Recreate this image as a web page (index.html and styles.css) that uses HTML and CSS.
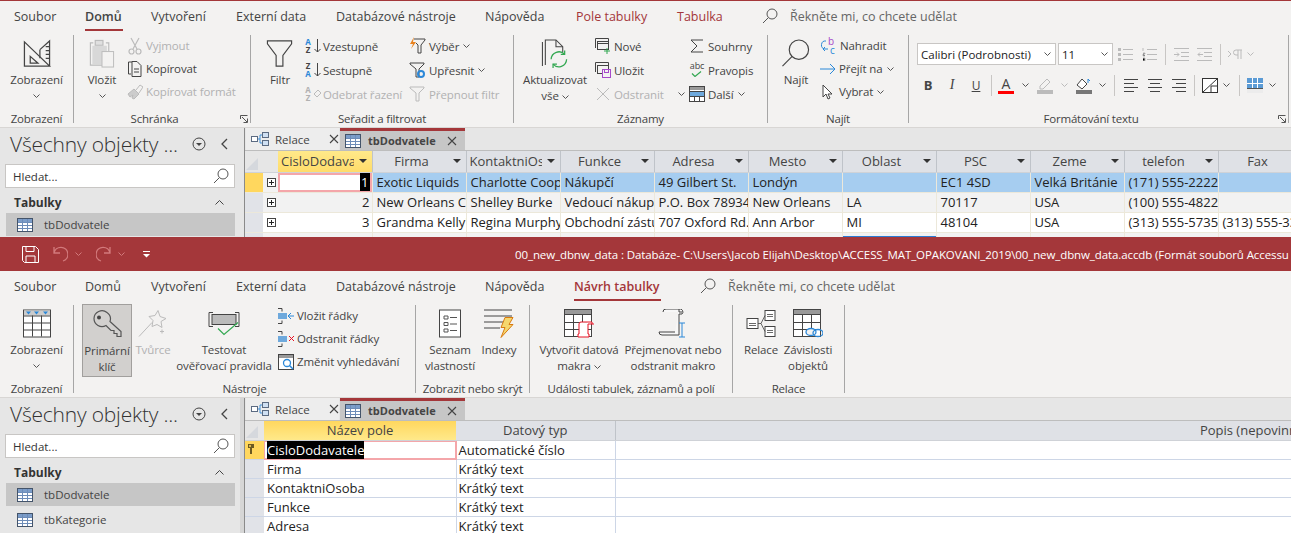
FILE: index.html
```html
<!DOCTYPE html>
<html lang="cs">
<head>
<meta charset="utf-8">
<title>Access</title>
<link rel="stylesheet" href="styles.css">
</head>
<body>
<svg class="defs" aria-hidden="true">
  <symbol id="tbl" viewBox="0 0 16 14"><rect x=".5" y=".5" width="15" height="13" fill="#fff" stroke="#44546a"/><rect x="1" y="1" width="14" height="3" fill="#7b9cc8"/><path d="M1 4.500h14M1 7.500h14M1 10.500h14M5.500 1v12M10.500 1v12" stroke="#6d8cb8" fill="none"/></symbol>
  <symbol id="rel" viewBox="0 0 18 14"><rect x=".5" y="4.500" width="6" height="5" fill="#fff" stroke="#5b6b82"/><rect x="11.500" y=".5" width="6" height="5" fill="#cfe0f3" stroke="#5b6b82"/><rect x="11.500" y="8.500" width="6" height="5" fill="#cfe0f3" stroke="#5b6b82"/><path d="M7 7h2M9 3v8M9 3h2M9 11h2" stroke="#3f8fd8" fill="none"/></symbol>
  <symbol id="x" viewBox="0 0 10 10"><path d="M1 1l8 8M9 1l-8 8" stroke="#444" fill="none" stroke-width="1.100"/></symbol>
  <symbol id="chev" viewBox="0 0 7 4"><path d="M.5.5l3 3 3-3" fill="none" stroke="#555"/></symbol>
  <symbol id="chevg" viewBox="0 0 7 4"><path d="M.5.5l3 3 3-3" fill="none" stroke="#bbb"/></symbol>
  <symbol id="chevt" viewBox="0 0 7 4"><path d="M.5.5l3 3 3-3" fill="none" stroke="#d27a7c"/></symbol>
  <symbol id="search" viewBox="0 0 16 16"><circle cx="10" cy="6" r="5" fill="none" stroke="#555"/><path d="M6.300 9.700L1 15" stroke="#555" fill="none"/></symbol>
  <symbol id="plus" viewBox="0 0 9 9"><rect x=".5" y=".5" width="8" height="8" fill="#fff" stroke="#444"/><path d="M2 4.500h5M4.500 2v5" stroke="#222"/></symbol>
</svg>

<section class="win win-a">
  <div class="redline"></div>
  <nav class="tabs">
    <span class="tab t1">Soubor</span>
    <span class="tab t2 active">Domů</span>
    <span class="tab t3">Vytvoření</span>
    <span class="tab t4">Externí data</span>
    <span class="tab t5">Databázové nástroje</span>
    <span class="tab t6">Nápověda</span>
    <span class="tab t7 ctx">Pole tabulky</span>
    <span class="tab t8 ctx">Tabulka</span>
    <span class="tell a"><svg width="16" height="16"><use href="#search"/></svg><span class="tell-t">Řekněte mi, co chcete udělat</span></span>
  </nav>
  <div class="ribbon">
    <div class="group g-view">
      <div class="body">
        <div class="big bw73">
          <svg class="bi" width="30" height="30" viewBox="0 0 30 30"><g fill="none" stroke="#444" stroke-width="1.300"><path d="M2 3L28 28H2Z"/><path d="M8 18l8 7H8Z"/><path d="M18 11L28 2V28"/><path d="M24 8h4M24 12h4M24 16h4M24 20h4"/><path d="M18 11v9"/></g></svg>
          <span>Zobrazení</span><svg class="ch" width="7" height="4"><use href="#chev"/></svg>
        </div>
      </div>
      <div class="glabel">Zobrazení</div>
    </div>
    <div class="group g-clip">
      <div class="body">
        <div class="big bw50 ml3">
          <svg class="bi" width="30" height="30" viewBox="0 0 30 30"><g fill="none" stroke="#bbb" stroke-width="1.200"><path d="M6 4H3v23h14"/><path d="M19 4h3v9"/><rect x="8" y="1.500" width="8" height="5" fill="#e0e0e0"/></g><rect x="5" y="7" width="15" height="19" fill="#d8d8d8"/><rect x="15" y="13" width="12" height="16" fill="#f3f2f1" stroke="#bbb"/></svg>
          <span>Vložit</span><svg class="ch" width="7" height="4"><use href="#chev"/></svg>
        </div>
        <div class="col tight">
          <div class="row off"><svg width="16" height="18" viewBox="0 0 16 18"><g fill="none" stroke="#bbb" stroke-width="1.200"><path d="M4 1l6 11M12 1L6 12"/><circle cx="4.500" cy="14.500" r="2.500"/><circle cx="11.500" cy="14.500" r="2.500"/></g></svg><span>Vyjmout</span></div>
          <div class="row"><svg width="16" height="18" viewBox="0 0 16 18"><g fill="none" stroke="#444"><path d="M5 2H1.500v12H4"/><path d="M5 1.500h5l4 4v11H5Z"/><path d="M7 9h5M7 12h5"/></g></svg><span>Kopírovat</span></div>
          <div class="row off"><svg width="16" height="18" viewBox="0 0 16 18"><path d="M1 11l6-5 5 5-5 5-2-1 1-3-3 2Z" fill="#ccc" stroke="#bbb"/><path d="M9 7l4-5 3 2-4 6" fill="none" stroke="#bbb"/></svg><span>Kopírovat formát</span></div>
        </div>
      </div>
      <div class="glabel has-launch">Schránka<svg class="launch" width="8" height="8" viewBox="0 0 8 8"><path d="M.5 4V.5H7.500M2 2l5 5M7.500 3.500v4H3.500" fill="none" stroke="#555"/></svg></div>
    </div>
    <div class="group g-sort">
      <div class="body">
        <div class="big bw48 ml5">
          <svg class="bi" width="30" height="30" viewBox="0 0 30 30"><path d="M2 2h25v3L18 17v11h-7V17L2 5Z" fill="none" stroke="#444" stroke-width="1.200"/></svg>
          <span>Filtr</span>
        </div>
        <div class="col w105">
          <div class="row"><span class="az"><b class="blue">A</b><b>Z</b></span><svg class="arrow" width="7" height="14" viewBox="0 0 7 14"><path d="M3.500 0v13M.5 10l3 3 3-3" fill="none" stroke="#444"/></svg><span>Vzestupně</span></div>
          <div class="row"><span class="az"><b>Z</b><b class="blue">A</b></span><svg class="arrow" width="7" height="14" viewBox="0 0 7 14"><path d="M3.500 0v13M.5 10l3 3 3-3" fill="none" stroke="#444"/></svg><span>Sestupně</span></div>
          <div class="row off"><span class="az"><b>A</b><b>Z</b></span><svg class="arrow" width="7" height="14" viewBox="0 0 7 14"><path d="M0 7l4-4 3 3-4 4Z" fill="none" stroke="#bbb"/></svg><span>Odebrat řazení</span></div>
        </div>
        <div class="col">
          <div class="row"><svg width="17" height="18" viewBox="0 0 17 18"><path d="M5 2h11v1l-4 5v8H9V8L7 6" fill="none" stroke="#444"/><path d="M5 0L1 7h3L2 12l5-7H4Z" fill="#e8821e"/></svg><span>Výběr</span><svg class="ci" width="7" height="4"><use href="#chev"/></svg></div>
          <div class="row"><svg width="17" height="18" viewBox="0 0 17 18"><path d="M1 2h14v1l-5 5v8H7V8L1 3Z" fill="none" stroke="#444"/><circle cx="12" cy="13" r="3" fill="none" stroke="#2b88d8" stroke-width="2"/></svg><span>Upřesnit</span><svg class="ci" width="7" height="4"><use href="#chev"/></svg></div>
          <div class="row off"><svg width="17" height="18" viewBox="0 0 17 18"><path d="M1 2h14v1l-5 5v8H7V8L1 3Z" fill="none" stroke="#bbb"/></svg><span>Přepnout filtr</span></div>
        </div>
      </div>
      <div class="glabel">Seřadit a filtrovat</div>
    </div>
    <div class="group g-rec">
      <div class="body">
        <div class="big bw80 ml1">
          <svg class="bi" width="30" height="30" viewBox="0 0 30 30"><g fill="none" stroke="#444" stroke-width="1.100"><path d="M2 3v25"/><path d="M5 27V1h11l7 7v6"/><path d="M16 1v7h7"/></g><g fill="none" stroke="#33a852" stroke-width="1.300"><path d="M11 21a8 8 0 0 1 14-5"/><path d="M27 21a8 8 0 0 1-14 5"/><path d="M25 12v4h-4M13 30v-4h4"/></g></svg>
          <span>Aktualizovat</span><span>vše <svg class="cin" width="7" height="4"><use href="#chev"/></svg></span>
        </div>
        <div class="col w94">
          <div class="row"><svg width="16" height="16" viewBox="0 0 16 16"><g fill="none" stroke="#444"><path d="M.5 10V.5h13V3"/><rect x="2.500" y="3.500" width="11" height="8"/><path d="M2.500 5.500h11"/></g><path d="M9 13h6M12 10v6" stroke="#33a852"/></svg><span>Nové</span></div>
          <div class="row"><svg width="16" height="16" viewBox="0 0 16 16"><g fill="none" stroke="#444"><path d="M.5 10V.5h13V3"/><rect x="2.500" y="3.500" width="11" height="8"/></g><rect x="7.500" y="7.500" width="8" height="8" fill="#f3f2f1" stroke="#a64ac9"/><rect x="9.500" y="7.500" width="4" height="3" fill="none" stroke="#a64ac9"/></svg><span>Uložit</span></div>
          <div class="row off"><svg width="16" height="16" viewBox="0 0 16 16"><path d="M2 2l12 12M14 2L2 14" stroke="#bbb" fill="none"/></svg><span>Odstranit</span><svg class="cia" width="7" height="4"><use href="#chev"/></svg></div>
        </div>
        <div class="col">
          <div class="row"><svg width="16" height="16" viewBox="0 0 16 16"><path d="M14 2H2l6 6-6 6h12" fill="none" stroke="#444"/></svg><span>Souhrny</span></div>
          <div class="row"><span class="abc">abc<svg width="12" height="6" viewBox="0 0 12 6"><path d="M1 2.500l3 3 6-5" fill="none" stroke="#33a852" stroke-width="1.200"/></svg></span><span>Pravopis</span></div>
          <div class="row"><svg width="16" height="16" viewBox="0 0 16 16"><rect x=".5" y=".5" width="15" height="15" fill="#fff" stroke="#444"/><rect x="1" y="1" width="14" height="3" fill="#999"/><rect x="1" y="6" width="14" height="4" fill="#6ea9dc"/><path d="M1 5.500h14M1 10.500h14M5.500 11v4M10.500 11v4" stroke="#444" fill="none"/></svg><span>Další</span><svg class="ci" width="7" height="4"><use href="#chev"/></svg></div>
        </div>
      </div>
      <div class="glabel">Záznamy</div>
    </div>
    <div class="group g-find">
      <div class="body">
        <div class="big bw48 ml4">
          <svg class="bi" width="30" height="30" viewBox="0 0 30 30"><circle cx="18" cy="11" r="10" fill="none" stroke="#444" stroke-width="1.200"/><path d="M11 18L1 28" fill="none" stroke="#444" stroke-width="1.200"/></svg>
          <span>Najít</span>
        </div>
        <div class="col tight">
          <div class="row"><span class="rep"><i class="pur">b</i><i class="cy">c</i><svg width="8" height="13" viewBox="0 0 8 13"><path d="M6 1a4 4 0 0 0-1 8h3M5 7l-2 2 2 2" fill="none" stroke="#2b88d8"/></svg></span><span>Nahradit</span></div>
          <div class="row"><svg width="16" height="14" viewBox="0 0 16 14"><path d="M0 7h15M10 2l5 5-5 5" fill="none" stroke="#2b88d8"/></svg><span>Přejít na</span><svg class="ci" width="7" height="4"><use href="#chev"/></svg></div>
          <div class="row"><svg width="16" height="16" viewBox="0 0 16 16"><path d="M3 1v12l3-3 2 5 2-1-2-4h4Z" fill="#fff" stroke="#444"/></svg><span>Vybrat</span><svg class="ci" width="7" height="4"><use href="#chev"/></svg></div>
        </div>
      </div>
      <div class="glabel">Najít</div>
    </div>
    <div class="group g-fmt">
      <div class="fmt">
        <div class="fr1">
          <div class="combo"><span>Calibri (Podrobnosti)</span><svg width="7" height="4"><use href="#chev"/></svg></div>
          <div class="combo size"><span>11</span><svg width="7" height="4"><use href="#chev"/></svg></div>
          <svg width="15" height="14" viewBox="0 0 15 14"><g stroke="#bbb"><path d="M5 2.500h10M5 7.500h10M5 12.500h10"/></g><g fill="#bbb"><rect y="1" width="3" height="3"/><rect y="6" width="3" height="3"/><rect y="11" width="3" height="3"/></g></svg>
          <svg width="15" height="14" viewBox="0 0 15 14"><g stroke="#bbb"><path d="M5 2.500h10M5 7.500h10M5 12.500h10M1 1v3M1 6h2v1H1v2h2M1 11h2v3H1"/></g></svg>
          <i class="vs"></i>
          <svg width="15" height="13" viewBox="0 0 15 13"><path d="M0 .5h15M7 4.500h8M7 8.500h8M0 12.500h15M0 6.500h5M3 4.500l2 2-2 2" fill="none" stroke="#bbb"/></svg>
          <svg width="15" height="13" viewBox="0 0 15 13"><path d="M0 .5h15M7 4.500h8M7 8.500h8M0 12.500h15M1 6.500h5M3 4.500l-2 2 2 2" fill="none" stroke="#bbb"/></svg>
          <i class="vs"></i>
          <svg width="15" height="10" viewBox="0 0 15 10"><path d="M0 2l3 3-3 3M8 1h6M8 1a2.500 2.500 0 0 0 0 5h2M10 1v9M13 1v9" fill="none" stroke="#bbb"/></svg>
          <svg width="7" height="4"><use href="#chevg"/></svg>
        </div>
        <div class="fr2">
          <b class="fb">B</b><i class="fi">I</i><u class="fu">U</u>
          <i class="vs"></i>
          <span class="fc"><span class="fa">A</span></span><svg width="7" height="4"><use href="#chev"/></svg>
          <svg width="16" height="17" viewBox="0 0 16 17"><path d="M3 9l7-7 3 3-7 7H3Z" fill="none" stroke="#bbb"/><rect y="13" width="16" height="4" fill="#bbb"/></svg><svg width="7" height="4"><use href="#chevg"/></svg>
          <svg width="16" height="17" viewBox="0 0 16 17"><path d="M1 8l5-6 5 5-5 5Z" fill="#fff" stroke="#444"/><path d="M12 6V2l2 2" fill="none" stroke="#2b88d8"/><rect y="13" width="16" height="4" fill="#777"/></svg><svg width="7" height="4"><use href="#chev"/></svg>
          <i class="vs"></i>
          <svg width="14" height="14" viewBox="0 0 14 14"><path d="M0 1.500h14M0 5.500h10M0 9.500h14M0 13.500h10" stroke="#444"/></svg>
          <svg width="14" height="14" viewBox="0 0 14 14"><path d="M0 1.500h14M2 5.500h10M0 9.500h14M2 13.500h10" stroke="#444"/></svg>
          <svg width="14" height="14" viewBox="0 0 14 14"><path d="M0 1.500h14M4 5.500h10M0 9.500h14M4 13.500h10" stroke="#444"/></svg>
          <i class="vs"></i>
          <svg width="16" height="15" viewBox="0 0 16 15"><rect x=".5" y=".5" width="15" height="14" fill="#fff" stroke="#333"/><path d="M1 14L15 1M9 8h6M9 8v6" stroke="#333" fill="none"/></svg><svg width="7" height="4"><use href="#chev"/></svg>
          <i class="vs"></i>
          <svg width="16" height="15" viewBox="0 0 16 15"><rect x="0" y="0" width="16" height="10" fill="#5b9bd5"/><path d="M0 5.500h16M5.500 0v10M10.500 0v10" stroke="#fff"/><path d="M0 10.500h16" stroke="#555"/><rect y="11" width="16" height="4" fill="#ececec"/></svg><svg width="7" height="4"><use href="#chev"/></svg>
        </div>
      </div>
      <div class="glabel has-launch">Formátování textu<svg class="launch" width="8" height="8" viewBox="0 0 8 8"><path d="M.5 4V.5H7.500M2 2l5 5M7.500 3.500v4H3.500" fill="none" stroke="#555"/></svg></div>
    </div>
  </div>
  <div class="shadow"></div>
  <div class="work h-a">
    <aside class="navp">
      <div class="navhead"><span class="navtitle">Všechny objekty ...</span><svg width="16" height="16" viewBox="0 0 16 16"><circle cx="8" cy="8" r="6" fill="none" stroke="#444"/><path d="M5 7h6l-3 3Z" fill="#444"/></svg><svg class="back" width="7" height="12" viewBox="0 0 7 12"><path d="M6 1L1 6l5 5" fill="none" stroke="#444" stroke-width="1.300"/></svg></div>
      <div class="navsearch"><span>Hledat...</span><svg width="16" height="16"><use href="#search"/></svg></div>
      <div class="navsec"><b>Tabulky</b><svg width="9" height="5" viewBox="0 0 9 5"><path d="M.5 4.500l4-4 4 4" fill="none" stroke="#444"/></svg></div>
      <div class="navitem sel"><svg width="16" height="14"><use href="#tbl"/></svg><span>tbDodvatele</span></div>
    </aside>
    <div class="split"></div>
    <div class="main">
      <div class="doctabs">
        <div class="dt rel"><svg width="18" height="14"><use href="#rel"/></svg><span>Relace</span><svg class="dx" width="10" height="10"><use href="#x"/></svg></div>
        <div class="dt on"><svg width="16" height="14"><use href="#tbl"/></svg><b>tbDodvatele</b><svg class="dx" width="10" height="10"><use href="#x"/></svg></div>
      </div>
      <table class="sheet">
        <colgroup><col class="c-sel"><col class="c-exp"><col class="c-d"><col class="c-d"><col class="c-d"><col class="c-d"><col class="c-d"><col class="c-d"><col class="c-d"><col class="c-d"><col class="c-d"><col class="c-d"><col class="c-d"></colgroup>
        <thead><tr>
          <th colspan="2" class="corner"><span class="tri"></span></th>
          <th class="hy"><div class="hd"><span>CisloDodavatele</span><i class="arr"></i></div></th>
          <th><div class="hd"><span>Firma</span><i class="arr"></i></div></th>
          <th><div class="hd"><span>KontaktniOsoba</span><i class="arr"></i></div></th>
          <th><div class="hd"><span>Funkce</span><i class="arr"></i></div></th>
          <th><div class="hd"><span>Adresa</span><i class="arr"></i></div></th>
          <th><div class="hd"><span>Mesto</span><i class="arr"></i></div></th>
          <th><div class="hd"><span>Oblast</span><i class="arr"></i></div></th>
          <th><div class="hd"><span>PSC</span><i class="arr"></i></div></th>
          <th><div class="hd"><span>Zeme</span><i class="arr"></i></div></th>
          <th><div class="hd"><span>telefon</span><i class="arr"></i></div></th>
          <th><div class="hd"><span>Fax</span><i class="arr"></i></div></th>
        </tr></thead>
        <tbody>
          <tr class="r-sel"><td class="rs act"></td><td class="ex"><svg width="9" height="9"><use href="#plus"/></svg></td><td class="num cur"><span class="hl">1</span></td><td>Exotic Liquids</td><td>Charlotte Cooper</td><td>Nákupčí</td><td>49 Gilbert St.</td><td>Londýn</td><td></td><td>EC1 4SD</td><td>Velká Británie</td><td>(171) 555-2222</td><td></td></tr>
          <tr class="r-alt"><td class="rs"></td><td class="ex"><svg width="9" height="9"><use href="#plus"/></svg></td><td class="num">2</td><td>New Orleans Cajun</td><td>Shelley Burke</td><td>Vedoucí nákupu</td><td>P.O. Box 78934</td><td>New Orleans</td><td>LA</td><td>70117</td><td>USA</td><td>(100) 555-4822</td><td></td></tr>
          <tr><td class="rs"></td><td class="ex"><svg width="9" height="9"><use href="#plus"/></svg></td><td class="num">3</td><td>Grandma Kelly's</td><td>Regina Murphy</td><td>Obchodní zástupce</td><td>707 Oxford Rd.</td><td>Ann Arbor</td><td>MI</td><td>48104</td><td>USA</td><td>(313) 555-5735</td><td>(313) 555-3349</td></tr>
          <tr class="r-alt r-last"><td class="rs"></td><td class="ex"></td><td></td><td></td><td></td><td></td><td></td><td></td><td class="bl"></td><td></td><td></td><td></td><td></td></tr>
        </tbody>
      </table>
    </div>
  </div>
</section>

<header class="titlebar">
  <svg class="q-save" width="17" height="17" viewBox="0 0 17 17"><path d="M.5.5h13l3 3v13H2.500l-2-2Z M4 16.500V10h9v6.500M4 .5v5h8v-5" fill="none" stroke="#fff"/></svg>
  <svg class="q-undo" width="15" height="16" viewBox="0 0 15 16"><path d="M1 1v6h6M1 7a7 7 0 1 1 9 8" fill="none" stroke="#d27a7c" stroke-width="1.300"/></svg>
  <svg class="q-c" width="7" height="4"><use href="#chevt"/></svg>
  <svg class="q-redo" width="15" height="16" viewBox="0 0 15 16"><path d="M14 1v6H8M14 7a7 7 0 1 0-9 8" fill="none" stroke="#d27a7c" stroke-width="1.300"/></svg>
  <svg class="q-c" width="7" height="4"><use href="#chevt"/></svg>
  <svg class="q-cust" width="7" height="7" viewBox="0 0 7 7"><path d="M0 .5h7" stroke="#fff"/><path d="M0 3h7L3.500 6.500Z" fill="#fff"/></svg>
  <span class="wtitle">00_new_dbnw_data : Databáze- C:\Users\Jacob Elijah\Desktop\ACCESS_MAT_OPAKOVANI_2019\00_new_dbnw_data.accdb (Formát souborů Accessu 2007 - 2016)</span>
</header>

<section class="win win-b">
  <nav class="tabs">
    <span class="tab t1">Soubor</span>
    <span class="tab t2">Domů</span>
    <span class="tab t3">Vytvoření</span>
    <span class="tab t4">Externí data</span>
    <span class="tab t5">Databázové nástroje</span>
    <span class="tab t6">Nápověda</span>
    <span class="tab t9 ctx active">Návrh tabulky</span>
    <span class="tell b"><svg width="16" height="16"><use href="#search"/></svg><span class="tell-t">Řekněte mi, co chcete udělat</span></span>
  </nav>
  <div class="ribbon">
    <div class="group g-view">
      <div class="body">
        <div class="big bw73">
          <svg class="bi" width="28" height="28" viewBox="0 0 28 28"><rect x=".5" y=".5" width="27" height="27" fill="#fff" stroke="#444"/><rect x="1" y="1" width="26" height="5" fill="#ccc"/><path d="M3 2h5l-2.500 3ZM11 2h5l-2.500 3ZM20 2h5l-2.500 3Z" fill="#2b88d8"/><path d="M1 6.500h26M1 13.500h26M1 20.500h26M9.500 6v21M18.500 6v21" stroke="#444" fill="none"/></svg>
          <span>Zobrazení</span><svg class="ch" width="7" height="4"><use href="#chev"/></svg>
        </div>
      </div>
      <div class="glabel">Zobrazení</div>
    </div>
    <div class="group g-tools">
      <div class="body">
        <div class="big bw50 ml8 pressed">
          <svg class="bi" width="30" height="28" viewBox="0 0 30 28"><path d="M2 8a8 8 0 0 1 13-6 8 8 0 0 1 3 9l11 10v5h-4v-3h-3v-3h-3l-5-5a8 8 0 0 1-12-7Z" fill="none" stroke="#555" stroke-width="1.200"/><circle cx="7" cy="7" r="2" fill="#444"/></svg>
          <span>Primární</span><span>klíč</span>
        </div>
        <div class="big bw42 off">
          <svg class="bi" width="30" height="28" viewBox="0 0 30 28"><path d="M1 27L14 13" stroke="#bbb" fill="none"/><path d="M20 1l2 6 6 2-5 3 1 6-5-3-5 2 1-6-4-4 6-1Z" fill="none" stroke="#bbb"/><path d="M24 20v4M22 22h4" stroke="#bbb"/></svg>
          <span>Tvůrce</span>
        </div>
        <div class="big bw100">
          <svg class="bi" width="32" height="28" viewBox="0 0 32 28"><path d="M5 3H1v14h4M27 3h4v14h-4" fill="none" stroke="#444"/><rect x="4" y="5" width="24" height="10" fill="#bbb" stroke="#444"/><path d="M10 19l6 6 14-12" fill="none" stroke="#33a852" stroke-width="1.200"/></svg>
          <span>Testovat</span><span class="nw">ověřovací pravidla</span>
        </div>
        <div class="col tight ml4">
          <div class="row"><svg width="16" height="16" viewBox="0 0 16 16"><path d="M0 .5h4v3M0 15.500h4v-3" fill="none" stroke="#444"/><rect y="5" width="9" height="6" fill="#6ea9dc"/><path d="M16 8H10M13 5l-3 3 3 3" fill="none" stroke="#2b88d8"/></svg><span>Vložit řádky</span></div>
          <div class="row"><svg width="16" height="16" viewBox="0 0 16 16"><path d="M0 .5h4v3M0 15.500h4v-3" fill="none" stroke="#444"/><rect y="5" width="9" height="6" fill="#6ea9dc"/><path d="M11 5l5 5M16 5l-5 5" fill="none" stroke="#e81123"/></svg><span>Odstranit řádky</span></div>
          <div class="row"><svg width="16" height="16" viewBox="0 0 16 16"><rect x=".5" y=".5" width="15" height="15" fill="#fff" stroke="#444"/><rect x="1" y="1" width="14" height="3" fill="#999"/><circle cx="9" cy="9" r="3.500" fill="none" stroke="#2b88d8" stroke-width="1.300"/><path d="M11.500 11.500L15 15" stroke="#2b88d8" stroke-width="1.500"/></svg><span>Změnit vyhledávání</span></div>
        </div>
      </div>
      <div class="glabel">Nástroje</div>
    </div>
    <div class="group g-show">
      <div class="body">
        <div class="big bw68">
          <svg class="bi" width="22" height="28" viewBox="0 0 22 28"><rect x=".5" y=".5" width="21" height="27" fill="#fff" stroke="#444"/><path d="M5 6.500h4v3H5ZM5 13h4v3H5ZM5 19.500h4v3H5ZM11 8h7M11 14.500h7M11 21h7" fill="none" stroke="#555"/></svg>
          <span>Seznam</span><span>vlastností</span>
        </div>
        <div class="big bw30">
          <svg class="bi" width="30" height="28" viewBox="0 0 30 28"><path d="M0 .5h28M0 6.500h28M0 12.500h20M0 18.500h16" stroke="#444" fill="none"/><path d="M21 8h8l-4 7h4L17 28l4-10h-4Z" fill="#f5d76e" stroke="#d87a10"/></svg>
          <span>Indexy</span>
        </div>
      </div>
      <div class="glabel">Zobrazit nebo skrýt</div>
    </div>
    <div class="group g-evt">
      <div class="body">
        <div class="big bw92 ml3">
          <svg class="bi" width="30" height="29" viewBox="0 0 30 29"><rect x=".5" y=".5" width="27" height="27" fill="#fff" stroke="#444"/><rect x="1" y="1" width="26" height="4" fill="#999"/><path d="M1 5.500h26M1 13.500h26M1 20.500h26M9.500 5v23M18.500 5v23" stroke="#444" fill="none"/><path d="M17 13h11v2h2M17 13a2 2 0 0 0-2 2v10h-1v3h11v-3h-1V15h4" fill="#fff" stroke="#e81123"/></svg>
          <span>Vytvořit datová</span><span>makra <svg class="cin" width="7" height="4"><use href="#chev"/></svg></span>
        </div>
        <div class="big bw96">
          <svg class="bi" width="30" height="29" viewBox="0 0 30 29"><path d="M5 3a3 3 0 0 1 3-3h13v3h3M21 0a3 3 0 0 1 3 5h-3v21H4a3 3 0 0 1-3-3h16" fill="#f7f7f7" stroke="#444"/><path d="M24 14v14M21 14h6M21 28h6" fill="none" stroke="#2b88d8"/></svg>
          <span class="nw">Přejmenovat nebo</span><span class="nw">odstranit makro</span>
        </div>
      </div>
      <div class="glabel">Události tabulek, záznamů a polí</div>
    </div>
    <div class="group g-rels">
      <div class="body">
        <div class="big bw36 ml10">
          <svg class="bi" width="30" height="28" viewBox="0 0 30 28"><rect x="1" y="9" width="11" height="10" fill="#fff" stroke="#444"/><rect x="19" y="1" width="10" height="10" fill="#fff" stroke="#444"/><rect x="19" y="17" width="10" height="10" fill="#fff" stroke="#444"/><path d="M3 14h7M3 16h7M21 5h6M21 7h6M21 21h6M21 23h6M12 14h3l4-8M15 14l4 8" fill="none" stroke="#444" stroke-width=".8"/></svg>
          <span>Relace</span>
        </div>
        <div class="big bw58">
          <svg class="bi" width="30" height="29" viewBox="0 0 30 29"><rect x=".5" y=".5" width="27" height="27" fill="#fff" stroke="#444"/><rect x="1" y="1" width="26" height="4" fill="#999"/><path d="M1 5.500h26M1 13.500h26M1 20.500h26M9.500 5v23M18.500 5v23" stroke="#444" fill="none"/><ellipse cx="18" cy="23" rx="5" ry="3.500" fill="#f3f2f1" stroke="#2b88d8" stroke-width="1.300"/><ellipse cx="25" cy="24" rx="5" ry="3.500" fill="none" stroke="#2b88d8" stroke-width="1.300"/></svg>
          <span>Závislosti</span><span>objektů</span>
        </div>
      </div>
      <div class="glabel">Relace</div>
    </div>
  </div>
  <div class="shadow"></div>
  <div class="work h-b">
    <aside class="navp">
      <div class="navhead"><span class="navtitle">Všechny objekty ...</span><svg width="16" height="16" viewBox="0 0 16 16"><circle cx="8" cy="8" r="6" fill="none" stroke="#444"/><path d="M5 7h6l-3 3Z" fill="#444"/></svg><svg class="back" width="7" height="12" viewBox="0 0 7 12"><path d="M6 1L1 6l5 5" fill="none" stroke="#444" stroke-width="1.300"/></svg></div>
      <div class="navsearch"><span>Hledat...</span><svg width="16" height="16"><use href="#search"/></svg></div>
      <div class="navsec"><b>Tabulky</b><svg width="9" height="5" viewBox="0 0 9 5"><path d="M.5 4.500l4-4 4 4" fill="none" stroke="#444"/></svg></div>
      <div class="navitem sel"><svg width="16" height="14"><use href="#tbl"/></svg><span>tbDodvatele</span></div>
      <div class="navitem"><svg width="16" height="14"><use href="#tbl"/></svg><span>tbKategorie</span></div>
    </aside>
    <div class="split light"></div>
    <div class="main">
      <div class="doctabs">
        <div class="dt rel"><svg width="18" height="14"><use href="#rel"/></svg><span>Relace</span><svg class="dx" width="10" height="10"><use href="#x"/></svg></div>
        <div class="dt on"><svg width="16" height="14"><use href="#tbl"/></svg><b>tbDodvatele</b><svg class="dx" width="10" height="10"><use href="#x"/></svg></div>
      </div>
      <table class="design">
        <colgroup><col class="d-sel"><col class="d-name"><col class="d-type"><col class="d-desc"></colgroup>
        <thead><tr><th class="corner"><span class="tri"></span></th><th class="hy2">Název pole</th><th>Datový typ</th><th>Popis (nepovinné)</th></tr></thead>
        <tbody>
          <tr><td class="rs act"><svg class="key" width="6" height="11" viewBox="0 0 6 11"><path d="M0 0h6v4H4v6H2V4H0Z" fill="#6b5a22"/><circle cx="2" cy="2" r="1" fill="#ffd75e"/></svg></td><td class="cur2"><span class="hl">CisloDodavatele</span></td><td>Automatické číslo</td><td></td></tr>
          <tr><td class="rs"></td><td>Firma</td><td>Krátký text</td><td></td></tr>
          <tr><td class="rs"></td><td>KontaktniOsoba</td><td>Krátký text</td><td></td></tr>
          <tr><td class="rs"></td><td>Funkce</td><td>Krátký text</td><td></td></tr>
          <tr><td class="rs"></td><td>Adresa</td><td>Krátký text</td><td></td></tr>
        </tbody>
      </table>
    </div>
  </div>
</section>
</body>
</html>
```

FILE: styles.css
```css
* { box-sizing: border-box; }
html, body { margin: 0; padding: 0; }
body {
  width: 1291px;
  height: 533px;
  overflow: hidden;
  background: #e6e6e6;
  font-family: "Open Sans", "Noto Sans", "Liberation Sans", sans-serif;
  font-size: 12px;
  color: #444;
}
.defs { display: none; }
svg { flex: none; display: block; }

.win { background: #f3f2f1; overflow: hidden; }
.win-a { height: 237px; }
.win-b { height: 262px; }
.redline { height: 1px; background: #a4373a; }

/* Tabs */
.tabs { display: flex; height: 30px; align-items: center; background: #f3f2f1; font-size: 12.500px; }
.tab { position: relative; white-space: nowrap; flex: none; }
.t1 { margin-left: 14px; width: 71px; }
.t2 { width: 66px; }
.t3 { width: 85px; }
.t4 { width: 100px; }
.t5 { width: 149px; }
.t6 { width: 91px; }
.t7 { width: 101px; }
.t8 { width: 85px; }
.t9 { margin-left: -2px; width: 127px; }
.ctx { color: #a4373a; }
.tab.active { font-weight: 600; }
.tab.active::after {
  content: "";
  position: absolute;
  left: 0;
  bottom: -6px;
  height: 2px;
  width: 38px;
  background: #a4373a;
}
.t9.active::after { width: 87px; }
.tell { display: flex; align-items: center; color: #666; }
.tell-t { margin-left: 12px; white-space: nowrap; }
.tell.b { margin-left: -1px; }

/* Ribbon */
.ribbon { display: flex; height: 96px; padding-top: 4px; background: #f3f2f1; }
.group { flex: none; height: 88px; border-right: 1px solid #a6a6a6; display: flex; flex-direction: column; }
.g-view { width: 74px; }
.g-clip { width: 177px; }
.g-sort { width: 263px; }
.g-rec { width: 254px; }
.g-find { width: 141px; }
.g-fmt { width: 380px; }
.g-tools { width: 342px; }
.g-show { width: 114px; }
.g-evt { width: 203px; }
.g-rels { width: 112px; }
.body { flex: 1; display: flex; min-height: 0; }
.glabel {
  position: relative;
  flex: none;
  height: 16px;
  margin-bottom: -4px;
  line-height: 16px;
  text-align: center;
  font-size: 11.500px;
  letter-spacing: -.2px;
  white-space: nowrap;
}
.has-launch { padding-right: 15px; }
.launch { position: absolute; right: 2px; top: 4px; }

.big {
  flex: none;
  display: flex;
  flex-direction: column;
  align-items: center;
  padding-top: 4px;
  line-height: 16px;
  white-space: nowrap;
  font-size: 11.500px;
  letter-spacing: -.1px;
}
.big .bi { height: 29px; margin-bottom: 4px; }
.big .ch { margin-top: 6px; }
.cin { display: inline-block; vertical-align: middle; }
.bw30 { width: 30px; }
.bw36 { width: 36px; }
.bw42 { width: 42px; }
.bw48 { width: 48px; }
.bw50 { width: 50px; }
.bw58 { width: 58px; }
.bw68 { width: 68px; }
.bw73 { width: 73px; }
.bw80 { width: 80px; }
.bw92 { width: 92px; }
.bw96 { width: 96px; }
.bw100 { width: 100px; }
.ml1 { margin-left: 1px; }
.ml3 { margin-left: 3px; }
.ml4 { margin-left: 4px; }
.ml5 { margin-left: 5px; }
.ml8 { margin-left: 8px; }
.ml10 { margin-left: 10px; }
.off, .off span { color: #b1b1b1; }
.pressed {
  height: 73px;
  margin-top: -1px;
  padding-top: 5px;
  background: #d2d0ce;
  border: 1px solid #a19f9d;
}
.nw { white-space: nowrap; }

.col { flex: none; display: flex; flex-direction: column; margin-top: -1px; }
.col.tight .row { height: 23px; }
.w105 { width: 105px; }
.w94 { width: 94px; }
.row { display: flex; align-items: center; flex: none; height: 24px; gap: 3px; white-space: nowrap; font-size: 11.500px; letter-spacing: -.1px; }
.ci { margin-left: 1px; }
.cia { margin-left: 11px; }
.az { display: flex; flex-direction: column; width: 8px; margin-right: -1px; font-size: 8px; line-height: 8px; align-items: center; }
.az b { font-weight: 700; }
.az .blue { color: #2b88d8; }
.arrow { margin-right: -1px; }
.abc { display: flex; flex-direction: column; align-items: center; width: 16px; font-size: 9px; line-height: 10px; margin-top: -2px; }
.rep { position: relative; width: 17px; height: 18px; display: block; }
.rep svg { position: absolute; left: 0; top: 3px; }
.rep i { position: absolute; font-style: normal; font-size: 10px; line-height: 10px; }
.rep .pur { left: 8px; top: -1px; color: #a64ac9; }
.rep .cy { left: 10px; top: 8px; color: #2b88d8; }

/* Format group */
.fmt { flex: 1; padding: 8px 0 0 8px; }
.fr1 {
  display: grid;
  grid-template-columns: 139px 57px 25px 23px 8px 24px 23px 8px 22px 8px;
  justify-items: center;
  align-items: center;
  height: 22px;
}
.fr2 {
  display: grid;
  grid-template-columns: 24px 24px 24px 6px 24px 14px 26px 12px 28px 8px 16px 18px 30px 18px 12px 20px 12px 14px 18px 16px;
  justify-items: center;
  align-items: center;
  height: 22px;
  margin: 9px 0 0 -1px;
}
.combo {
  display: flex;
  align-items: center;
  justify-content: space-between;
  width: 139px;
  height: 22px;
  padding: 0 4px 0 3px;
  background: #fff;
  border: 1px solid #c8c6c4;
  color: #222;
  font-size: 11.500px;
  white-space: nowrap;
}
.combo.size { width: 55px; margin-left: 2px; justify-self: start; }
.vs { display: block; width: 1px; height: 21px; background: #c8c6c4; }
.fb { font-size: 13px; }
.fi { font-family: "Liberation Serif", serif; font-size: 14px; }
.fu { font-size: 12px; }
.fa { display: block; width: 16px; text-align: center; font-size: 14px; line-height: 14px; border-bottom: 3px solid #f00; }

.shadow { height: 1px; background: #d8d6d4; }

/* Workspace */
.work { display: flex; background: #e6e6e6; }
.h-a { height: 109px; overflow: hidden; }
.h-b { height: 135px; overflow: hidden; }
.navp { flex: none; width: 240px; }
.navhead { display: flex; align-items: center; height: 32px; padding-left: 10px; }
.navtitle { width: 181px; font-size: 21px; letter-spacing: -.2px; font-weight: 300; white-space: nowrap; color: #333; }
.navhead .back { margin-left: 14px; }
.navsearch {
  display: flex;
  align-items: center;
  justify-content: space-between;
  height: 24px;
  margin: 4px 5px 0;
  padding: 0 5px 0 7px;
  background: #fff;
  border: 1px solid #c8c6c4;
  color: #333;
  font-size: 11.500px;
}
.navsec { display: flex; align-items: center; justify-content: space-between; height: 25px; padding: 3px 16px 0 14px; font-size: 12px; color: #333; }
.navitem { display: flex; align-items: center; height: 23px; margin: 0 5px 2px 6px; padding-left: 11px; gap: 11px; font-size: 11.500px; }
.navitem.sel { background: #c6c6c6; }
.split { flex: none; width: 5px; background: #e6e6e6; border-right: 1px solid #8a8a8a; }
.split.light { background: #d6d6d6; }
.main { flex: 1; min-width: 0; overflow: hidden; }
.doctabs { display: flex; height: 23px; padding-left: 1px; border-bottom: 1px solid #bdbdbd; }
.dt { display: flex; align-items: center; height: 22px; flex: none; font-size: 11.500px; }
.dt.rel { width: 93px; padding-left: 5px; gap: 6px; background: #ededed; }
.dt.rel .dx { margin-left: 13px; }
.dt.on { width: 125px; margin-left: 1px; padding-left: 5px; gap: 7px; background: #c6c6c6; border-top: 3px solid #a4373a; }
.dt.on b { width: 72px; white-space: nowrap; font-weight: 700; font-size: 11px; }

/* Datasheet */
table { border-collapse: collapse; table-layout: fixed; font-size: 13px; }
.sheet { width: 1067px; }
.c-sel { width: 18px; }
.c-exp { width: 15px; }
.c-d { width: 94px; }
.sheet th { height: 21px; padding: 0; background: #dfe1e6; border-right: 1px solid #bfc3c9; border-bottom: 1px solid #cfd2d7; font-weight: 400; color: #444; }
.sheet .corner, .design .corner { position: relative; background: #e6e6e6; border-right: 0; }
.tri { position: absolute; left: 1px; bottom: 2px; width: 0; height: 0; border-left: 12px solid transparent; border-bottom: 12px solid #d5d8dd; }
.sheet .hy { background: linear-gradient(#ffe98a, #ffdc6a); }
.hd { display: flex; align-items: center; padding: 0 5px 0 3px; }
.hd span { flex: 1; min-width: 0; overflow: hidden; white-space: nowrap; text-align: center; }
.hy .hd span { text-align: left; }
.arr { flex: none; margin-left: 5px; width: 0; height: 0; border: 4px solid transparent; border-top-color: #333; border-bottom: 0; }
.sheet td { height: 20px; padding: 0 3px 0 4px; overflow: hidden; white-space: nowrap; color: #222; background: #fff; border-right: 1px solid #ece8da; border-bottom: 1px solid #ece8da; }
.sheet .r-sel td { background: #a6cdf0; }
.sheet .r-alt td { background: #f2f2f2; }
.sheet .r-last td { height: 5px; border-bottom: 0; }
.sheet td.rs { padding: 0; }
.sheet td.rs, .sheet .r-alt td.rs { background: #e1e3e8; border-right: 0; }
.sheet .r-sel td.rs.act { background: #ffd75e; }
.sheet .ex, .sheet .r-sel .ex, .sheet .r-alt .ex { padding: 0 0 0 4px; border-right: 0; }
.sheet .r-sel .ex { background: #f2f2f2; }
.sheet .num { text-align: right; padding-right: 2px; }
.sheet .r-sel td.cur { background: #fff; box-shadow: inset 0 0 0 2px #f4a6aa; }
.sheet .r-alt td.bl { box-shadow: inset 0 -1px 0 #2b7cd3; }
.hl { background: #000; color: #fff; }
.sheet .hl { display: inline-block; padding: 0 1px; }

/* Design view */
.design { width: 1648px; }
.d-sel { width: 19px; }
.d-name { width: 192px; }
.d-type { width: 159px; }
.d-desc { width: 1278px; }
.design th { height: 19px; padding: 0; background: #dfe1e6; border-right: 1px solid #bfc3c9; border-bottom: 1px solid #cfd2d7; font-weight: 400; color: #444; }
.design .hy2 { background: linear-gradient(#ffd75e, #ffe98a); border-right: 0; }
.design td { height: 19px; padding: 0 3px; overflow: hidden; white-space: nowrap; color: #222; background: #fff; border-right: 1px solid #cdd6e6; border-bottom: 1px solid #cdd6e6; }
.design td + td + td { padding-left: 2px; }
.design td.rs { padding: 0; background: #e1e3e8; border-right: 0; border-bottom: 1px solid #cdd6e6; }
.design td.rs.act { background: #ffd75e; }
.design .cur2 { box-shadow: inset 0 0 0 1px #f4a6aa; border-color: #f4a6aa; }
.key { margin-left: 3px; }

/* Title bar */
.titlebar { display: flex; align-items: center; height: 34px; background: #a4373a; color: #fff; overflow: hidden; }
.q-save { margin-left: 22px; }
.q-undo { margin-left: 14px; }
.q-redo { margin-left: 14px; }
.q-c { margin-left: 7px; }
.q-cust { margin-left: 18px; }
.wtitle { margin-left: 365px; font-size: 11.500px; letter-spacing: -.1px; white-space: nowrap; }
```
